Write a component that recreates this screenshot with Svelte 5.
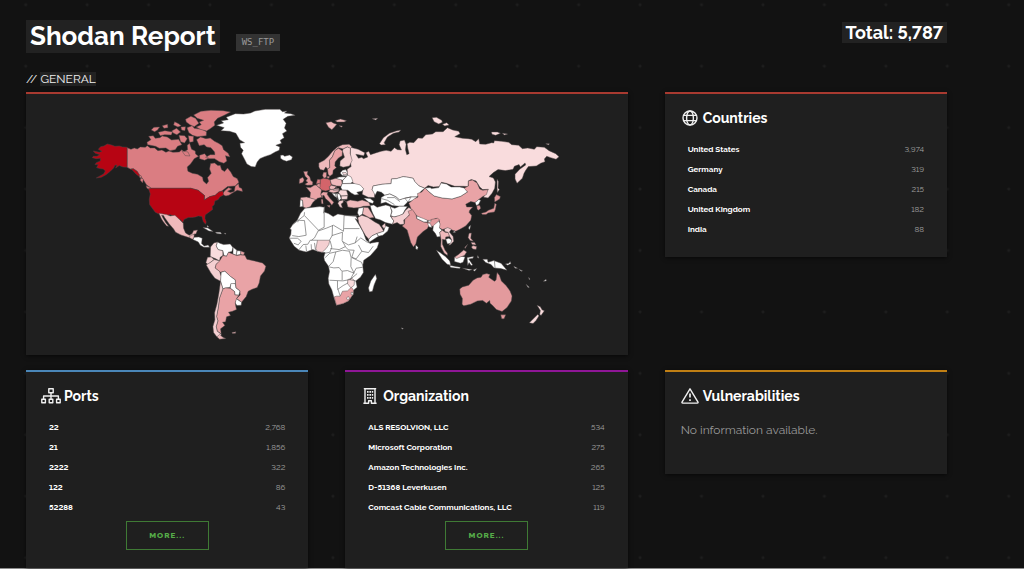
<script lang="ts">
  type Row = [label: string, count: string];
  type Shape = { c: string; d: string };
  type Region = { x: number; y: number; land: Shape[]; borders?: string };

  const countries: Row[] = [
    ['United States', '3,974'],
    ['Germany', '319'],
    ['Canada', '215'],
    ['United Kingdom', '182'],
    ['India', '88'],
  ];
  const ports: Row[] = [
    ['22', '2,768'],
    ['21', '1,856'],
    ['2222', '322'],
    ['122', '86'],
    ['52288', '43'],
  ];
  const organizations: Row[] = [
    ['ALS RESOLVION, LLC', '534'],
    ['Microsoft Corporation', '275'],
    ['Amazon Technologies Inc.', '265'],
    ['D-51368 Leverkusen', '125'],
    ['Comcast Cable Communications, LLC', '119'],
  ];

  // Choropleth steps, from no results to the most results.
  const none = '#ffffff';
  const l1 = '#f9dcdd';
  const l2 = '#f4cfd1';
  const l3 = '#efb9bb';
  const l4 = '#e9a3a6';
  const l5 = '#e39a9d';
  const l6 = '#da7d82';
  const l7 = '#d3646a';
  const top = '#b70413';

  // Every region has its own origin and is plotted at three units per map unit.
  const regions: Region[] = [
    {
      // North America
      x: 80,
      y: 95,
      land: [
        { c: top, d: 'M142 157L128 156 118 153 105 154 95 150 82 147 72 153 62 155 55 163 66 169 58 172 40 168 46 175 60 179 51 184 40 184 37 188 49 191 61 190 61 198 49 203 45 209 55 209 50 218 59 221 70 222 76 228 71 237 60 243 49 249 64 247 79 239 91 229 101 219 105 211 111 210 107 219 118 212 129 216 142 217 151 222 160 221 172 229 184 243 182 248 168 237 157 225 142 217Z' },
        { c: l6, d: 'M142 158L153 163 163 159 172 162 181 156 196 157 202 152 211 159 224 159 234 167 246 165 258 172 267 168 279 172 298 171 306 164 312 170 323 164 322 151 329 145 335 163 346 168 347 177 356 184 343 191 332 207 322 216 324 229 337 235 353 238 368 247 370 258 380 267 386 259 383 248 394 235 389 222 392 206 404 204 414 212 421 211 425 224 434 230 443 219 453 232 460 245 472 251 477 262 466 273 443 275 426 288 417 291 406 301 390 305 373 315 374 302 363 293 355 286 333 280 214 280 200 270 191 256 178 239 172 229 160 221 151 222 142 217Z' },
        { c: l6, d: 'M427 298L435 287 446 278 456 282 443 289 451 293 463 290 466 274 476 266 478 277 486 281 488 290 472 286 460 293 447 301 438 303Z' },
        { c: l6, d: 'M198 272L211 278 213 286 201 280ZM183 247L190 254 188 264 181 256ZM178 240L184 243 186 250 180 249Z' },
        { c: l6, d: 'M206 124L220 122 226 130 240 128 247 123 262 126 275 135 296 133 306 149 293 154 286 164 270 167 258 159 238 160 227 154 203 149 201 142 213 134Z' },
        { c: l6, d: 'M214 105L222 97 239 96 233 105 224 110ZM247 92L263 88 264 98 252 100ZM235 112L255 107 278 111 274 120 254 119 241 122ZM284 80L296 86 304 92 294 96 281 90ZM275 108L290 100 302 111 291 119 281 115ZM303 96L317 95 315 107 305 105ZM297 121L314 122 322 131 314 144 302 140ZM325 122L341 124 340 140 329 142ZM321 98L337 92 343 100 366 103 380 110 379 122 352 125 338 121 327 113Z' },
        { c: l6, d: 'M317 73L333 64 347 70 357 85 343 95 330 89 319 81ZM341 60L363 49 393 46 430 47 452 51 433 61 413 70 403 81 405 91 391 101 380 108 361 103 349 96 364 89 358 81 371 76 352 70Z' },
        { c: l6, d: 'M350 134L362 126 378 131 391 129 404 139 416 145 427 152 431 164 445 175 450 186 437 182 441 198 432 205 418 200 404 191 386 191 377 187 391 179 405 179 404 171 393 158 380 156 373 149 358 152ZM359 181L374 176 386 190 374 196 359 191ZM306 168L324 171 330 183 316 182Z' },
        { c: none, d: 'M410 91L431 84 424 77 445 74 439 67 466 56 491 57 512 54 525 48 556 43 600 43 608 50 622 48 614 54 633 56 646 61 624 64 610 73 619 85 614 99 621 108 608 116 613 128 601 136 605 145 588 151 600 156 598 166 586 171 572 179 554 185 540 191 532 201 526 216 514 215 501 207 493 191 485 176 490 166 482 157 480 145 494 143 479 134 468 115 449 109 423 107 433 98Z' },
        { c: none, d: 'M602 181L610 180 614 184 629 180 638 186 635 194 620 199 609 195 602 190Z' },
        { c: top, d: 'M214 280L333 280 355 286 363 293 374 302 373 315 390 305 406 301 417 291 429 288 431 300 420 306 415 314 405 318 403 329 397 335 398 344 387 352 376 360 375 370 379 381 377 388 370 380 366 365 355 363 347 366 335 368 325 368 312 374 309 383 301 374 292 373 285 365 270 359 260 363 240 359 226 352 220 344 209 329 208 313 211 297 206 281Z' },
      ],
    },
    {
      // Central and South America
      x: 140,
      y: 210,
      land: [
        { c: l3, d: 'M57 10L80 14 91 18 105 16 118 28 130 40 131 55 137 69 148 76 157 71 161 62 173 60 168 72 163 72 160 82 147 83 123 75 107 67 101 57 88 42 74 23 71 17 65 16 70 26 78 39 86 49 80 48 69 34 64 26Z' },
        { c: l3, d: 'M147 82L154 76 163 73 162 84 157 88Z' },
        { c: none, d: 'M163 82L177 81 187 85 185 101 193 108 205 105 209 112 192 112 181 106 175 96 159 89Z' },
        { c: none, d: 'M189 53L204 54 220 65 207 63ZM202 46L207 51 202 52ZM226 67L242 67 245 72 231 71ZM252 70L258 70 257 73Z' },
        { c: l1, d: 'M212 111L222 99 233 96 229 108 235 119 249 122 249 137 241 142 239 153 226 146 211 140Z' },
        { c: none, d: 'M233 96L240 100 251 104 271 102 279 113 276 125 266 127 260 139 252 137 249 122 235 119 229 108Z' },
        { c: none, d: 'M280 112L292 122 289 136 279 132ZM290 122L303 123 303 134 289 136Z' },
        { c: l4, d: 'M303 123L314 128 311 136 302 134Z' },
        { c: l2, d: 'M203 142L214 141 223 149 211 158 204 164 198 158Z' },
        { c: l2, d: 'M223 149L241 153 229 163 226 174 239 184 244 200 242 214 225 205 213 189 199 165 211 158Z' },
        { c: l4, d: 'M239 153L249 137 260 139 266 127 278 132 290 137 302 135 315 136 321 148 344 153 368 159 378 169 374 183 362 198 358 219 352 233 337 238 325 244 319 260 305 277 290 266 301 255 300 243 288 234 286 210 272 200 255 184 242 187 226 174 229 163Z' },
        { c: none, d: 'M244 187L255 184 272 200 286 210 287 221 273 223 270 233 257 234 249 237 242 214Z' },
        { c: none, d: 'M273 221L286 221 288 234 300 243 297 256 285 255 284 245 271 235Z' },
        { c: none, d: 'M288 266L305 277 304 286 291 287 286 279Z' },
        { c: l4, d: 'M249 237L257 234 271 235 284 245 285 255 297 256 290 266 286 279 288 291 290 299 278 304 266 307 272 317 260 321 257 336 248 337 255 347 242 357 244 372 232 364 229 350 234 333 230 320 235 294 239 264Z' },
        { c: l2, d: 'M242 214L249 237 239 264 235 294 230 320 234 333 229 350 232 364 244 373 242 385 230 380 221 368 219 350 225 330 224 309 231 283 237 250Z' },
        { c: l3, d: 'M239 374L249 382 258 386 239 388 231 381ZM276 368L288 366 287 370 278 371Z' },
      ],
    },
    {
      // Europe and northern Asia
      x: 280,
      y: 110,
      land: [
        { c: l1, d: 'M212 112L235 118 255 128 252 137 228 133 236 145 246 142 251 146 264 141 258 128 267 124 272 134 290 128 304 124 319 121 334 124 344 113 353 119 365 120 358 104 361 93 374 90 379 103 377 119 381 134 388 131 384 115 382 101 390 97 402 98 415 84 428 85 438 74 458 72 468 65 490 65 503 53 519 60 537 64 541 71 525 80 548 85 565 86 576 88 588 95 597 86 600 102 618 103 636 98 642 99 644 92 666 94 687 97 696 104 717 106 728 116 744 114 764 118 771 110 794 112 808 122 828 131 838 140 829 148 813 143 801 139 794 147 796 155 783 160 770 168 746 170 738 181 733 190 728 205 712 220 706 207 706 193 720 178 738 165 736 159 722 171 718 164 704 169 700 178 677 182 655 179 641 188 628 200 641 204 647 216 645 235 637 250 625 264 612 262 616 249 626 238 609 239 600 231 589 213 574 209 566 213 565 230 550 229 525 229 510 224 499 220 485 217 479 230 461 231 445 227 435 235 418 228 405 215 400 205 385 202 370 200 351 206 335 207 334 221 307 223 280 228 277 239 285 248 284 263 265 262 247 253 250 235 229 225 215 215 203 199 202 178 214 170 211 152Z' },
        { c: l1, d: 'M299 101L311 83 329 70 349 63 363 60 358 66 341 70 323 81 313 98 317 104 304 105ZM457 23L470 22 486 31 488 37 477 42 463 35ZM488 43L501 38 508 45 495 48ZM635 66L653 66 662 70 648 76 637 73ZM668 70L684 72 674 75ZM798 101L809 101 807 105ZM277 26L294 25 288 30ZM652 208L656 215 655 234 659 239 653 248 652 233Z' },
        { c: l3, d: 'M138 38L154 35 162 40 171 43 164 51 156 59 146 52ZM166 32L182 27 200 32 193 36 172 36ZM178 47L188 48 185 52Z' },
        { c: l3, d: 'M117 171L117 159 133 151 146 139 159 123 173 111 188 104 208 103 216 110 212 116 203 111 190 117 176 113 165 122 158 140 149 151 150 173 143 177 138 171 132 181 121 179Z' },
        { c: l4, d: 'M143 177L150 173 149 151 158 140 165 122 176 115 188 123 187 137 176 144 166 156 165 168 170 173 160 181 159 192 150 199 145 193Z' },
        { c: l2, d: 'M188 123L190 117 203 111 212 115 211 130 217 151 209 168 190 172 180 168 181 153 194 142Z' },
        { c: l5, d: 'M131 187L140 187 140 202 132 205 128 197ZM142 199L149 199 148 205 142 205Z' },
        { c: l7, d: 'M121 209L131 205 144 207 151 210 155 226 148 231 152 239 138 243 125 240 118 231 121 220Z' },
        { c: l5, d: 'M71 185L84 184 82 193 90 201 93 212 99 216 98 225 82 226 75 223 84 217 78 213 83 206 76 199ZM59 207L69 202 73 210 69 218 58 221Z' },
        { c: l4, d: 'M79 232L92 233 103 226 109 225 118 233 125 240 123 252 127 262 113 265 108 270 90 264 92 248Z' },
        { c: l5, d: 'M109 225L120 219 121 231 118 233Z' },
        { c: l6, d: 'M109 222L113 208 121 209 121 220Z' },
        { c: l3, d: 'M63 263L80 261 108 269 99 278 92 290 79 295 70 291 68 271 61 270Z' },
        { c: none, d: 'M61 270L68 271 69 290 60 291Z' },
        { c: l4, d: 'M123 252L130 246 144 247 142 253 151 266 162 277 156 286 149 276 137 266 132 256 125 260ZM141 287L151 286 149 293ZM124 268L129 268 130 282 125 281ZM125 257L129 258 128 265Z' },
        { c: l3, d: 'M151 210L168 205 185 208 187 220 184 229 170 228 155 224ZM148 231L155 226 170 230 161 239 152 239ZM152 239L177 235 177 245 160 249 146 245Z' },
        { c: none, d: 'M188 181L198 179 203 188 202 198 187 197 181 189ZM168 205L178 201 200 200 189 211ZM189 211L203 195 214 201 219 214 213 221 188 221ZM187 221L213 220 225 221 241 225 252 237 245 244 231 247 237 254 225 255 214 249 204 241 187 241 183 232ZM156 249L173 252 172 264 163 258ZM170 250L180 252 184 266 177 273Z' },
        { c: l1, d: 'M181 240L200 241 205 257 184 258 176 248ZM184 258L204 257 202 268 185 269ZM188 187L199 188 202 194 190 194Z' },
        { c: l2, d: 'M178 273L191 270 190 278 184 282 188 294 180 291 174 280Z' },
        { c: l3, d: 'M200 275L211 270 234 274 247 270 267 277 272 288 251 289 239 293 222 294 204 291Z' },
        { c: none, d: 'M252 264L271 266 282 274 279 281 267 277Z' },
        { c: none, d: 'M277 239L280 228 307 223 334 221 335 207 351 206 370 200 385 202 400 205 405 215 418 228 435 235 423 245 412 261 394 261 375 265 359 270 349 261 330 252 315 256 305 247 292 244 286 256Z' },
        { c: none, d: 'M304 263L315 256 330 252 349 261 359 270 375 265 394 261 388 271 380 280 371 289 359 289 337 287 318 277 303 281ZM375 265L394 261 412 261 400 272 384 276Z' },
        { c: none, d: 'M271 287L282 285 292 292 306 288 318 285 331 289 336 304 332 319 342 333 338 343 317 338 302 330 287 326 279 311 275 301Z' },
        { c: none, d: 'M331 290L345 295 359 289 371 289 383 290 375 301 369 313 356 318 342 321 333 317 337 304Z' },
        { c: l2, d: 'M342 333L333 319 345 321 358 317 370 312 377 301 387 293 397 298 393 309 381 324 372 330 373 343 361 344 352 338 338 343Z' },
      ],
      borders: 'M305 266L323 271 344 284M322 263L345 263 360 275M192 270L202 278M160 241L181 240M170 230L172 240M166 252L175 272',
    },
    {
      // Africa and the Middle East
      x: 280,
      y: 190,
      land: [
        { c: none, d: 'M75 55L100 52 120 50 134 52 133 66 146 71 160 80 174 72 191 75 213 78 229 79 234 90 226 86 239 107 250 126 259 150 271 160 292 156 298 157 292 174 272 197 252 211 249 227 251 248 242 262 228 273 232 292 221 301 220 313 206 333 190 341 170 346 162 322 156 300 147 282 145 265 149 245 146 229 134 212 132 201 136 188 125 187 112 184 99 179 79 186 58 181 43 169 32 152 28 144 33 133 34 119 30 117 39 103 52 91 62 70Z' },
        { c: none, d: 'M287 253L291 266 283 285 278 304 269 306 266 294 273 273Z' },
        { c: l2, d: 'M113 151L150 151 147 164 139 176 127 187 112 184 108 176Z' },
        { c: l4, d: 'M163 321L170 319 181 319 188 304 203 303 215 292 221 301 220 313 206 333 190 341 170 346Z' },
        { c: l1, d: 'M204 269L216 265 224 272 223 286 213 294 203 281Z' },
        { c: none, d: 'M200 324L206 320 209 326 203 330ZM214 307L220 308 220 315 214 314Z' },
        { c: l2, d: 'M234 83L246 76 264 82 285 96 298 103 306 114 312 124 291 131 276 138 267 148 257 137 247 119 237 99Z' },
        { c: none, d: 'M267 148L276 138 291 131 296 139 273 154 267 157ZM291 131L312 124 316 107 328 112 324 123 309 136 296 139Z' },
        { c: l2, d: 'M306 108L316 99 317 110 313 117Z' },
        { c: l3, d: 'M251 52L265 53 274 67 283 83 270 84 248 72Z' },
        { c: none, d: 'M236 55L251 52 248 72 238 79 233 69Z' },
      ],
      borders:
        'M74 67L73 77 40 103M74 77L116 121 133 112 133 66M54 97L55 91 74 92 79 136 57 140 37 137M30 145L53 145 64 154 55 165 42 160M56 181L70 164 84 163 91 151 113 151M78 167L80 184M94 163L95 180M104 159L107 181M116 121L104 144 95 151M116 123L139 115 161 106 191 124 193 75M193 116L239 116M158 106L157 137 149 151M151 153L156 172 150 187 135 190M156 137L188 127 187 152 197 170 178 179 152 176M188 155L206 165 226 159 232 140M226 159L243 144 259 155 273 161M236 165L246 184 266 188 280 169M246 184L229 207 216 202 223 181 206 180 196 170M136 203L150 190 168 186 160 215 146 230M168 186L188 181 209 184 214 203 213 230 223 250 203 242 186 244 178 233 162 234 148 231M149 271L189 273 211 269 232 251M211 270L229 235 249 232M187 245L187 271M173 273L173 294 181 318M173 299L190 287 205 279M209 269L228 273M216 203L245 217 249 227M193 77L234 77M131 70L134 50',
    },
    {
      // South-east Asia and Oceania
      x: 380,
      y: 180,
      land: [
        { c: l4, d: 'M87 70L103 57 115 51 113 41 126 36 136 24 147 35 163 48 187 54 217 57 243 49 263 36 251 26 266 18 266 3 278 0 292 9 300 27 309 31 325 29 320 44 307 51 297 59 286 68 273 65 258 73 261 81 279 81 270 91 268 97 276 107 273 121 258 138 239 149 228 154 219 151 204 145 188 149 177 143 179 123 169 115 153 123 132 120 111 108 95 89Z' },
        { c: none, d: 'M136 24L151 23 155 26 177 23 184 9 200 12 214 21 240 21 253 24 263 36 243 49 217 57 187 54 163 48 147 35Z' },
        { c: l5, d: 'M67 138L74 132 75 119 89 105 85 94 98 89 109 105 111 116 132 126 145 128 153 119 173 115 180 120 164 139 146 139 143 146 130 155 113 171 108 192 101 201 93 188 82 150Z' },
        { c: none, d: 'M111 108L131 116 143 121 143 126 132 126 111 116ZM146 121L155 122 152 126 145 127ZM143 130L151 130 157 143 148 141ZM108 195L115 202 113 209 108 207Z' },
        { c: none, d: 'M177 123L181 132 179 144 187 151 180 157 182 170 172 171 167 161 159 151 161 137Z' },
        { c: l3, d: 'M180 157L188 151 196 157 207 158 209 170 198 171 197 180 188 178 188 193 196 211 203 220 203 227 193 219 183 200 184 180Z' },
        { c: l2, d: 'M194 147L204 143 215 148 209 156 220 170 222 184 213 194 207 196 216 180 209 168 205 157 195 155Z' },
        { c: none, d: 'M198 178L207 175 216 180 213 190 203 192ZM227 158L219 157 225 153ZM286 68L297 59 303 61 297 73 290 77Z' },
        { c: l5, d: 'M291 77L300 76 303 85 297 91 292 88ZM305 100L319 96 326 91 342 85 345 70 350 73 347 89 344 96 325 99 319 104 308 104ZM345 66L344 53 350 44 362 50 360 57 350 63Z' },
        { c: none, d: 'M267 141L273 135 270 149 267 147Z' },
        { c: none, d: 'M170 211L181 218 197 230 210 243 213 256 202 253 187 238ZM209 256L224 259 242 262 240 266 213 263ZM224 232L231 231 246 229 256 231 250 247 242 250 224 245ZM262 233L281 230 280 235 267 237 279 255 274 257 268 248 264 257Z' },
        { c: l3, d: 'M224 232L236 224 252 210 261 216 254 227 242 231 231 236Z' },
        { c: l3, d: 'M268 160L275 159 273 175 281 184 271 182 265 173ZM280 197L291 200 289 209 279 207 275 201ZM274 187L285 188 289 195 277 194ZM264 193L256 206 255 202Z' },
        { c: none, d: 'M309 238L323 238 325 247 342 242 364 250 382 271 363 266 343 264 334 254 318 248ZM248 265L278 269 268 272ZM280 270L291 266 285 274ZM294 227L298 235 293 233Z' },
        { c: l5, d: 'M240 327L248 321 267 316 280 301 292 294 304 292 309 284 321 281 331 284 327 292 344 304 349 300 352 278 359 286 365 303 379 317 391 333 397 348 395 363 382 383 367 395 350 389 338 376 331 370 330 362 320 370 309 362 293 363 273 373 252 378 247 373 248 356 241 343ZM363 405L378 405 373 417 366 417Z' },
        { c: l1, d: 'M472 376L482 381 487 390 494 393 484 407 480 403 482 392ZM474 404L478 408 469 422 460 431 449 429 461 417Z' },
        { c: none, d: 'M377 252L388 250 391 245 394 251 384 256ZM402 259L414 265 406 265ZM417 267L429 273 424 274ZM439 313L449 322 445 323ZM447 292L451 298 448 299ZM491 304L499 298 500 303ZM65 444L71 446 67 448Z' },
      ],
      borders: 'M344 243L346 264',
    },
  ];
</script>

{#snippet counts(rows: Row[], caption: string)}
  <table class="counts" aria-label={caption}>
    <tbody>
      {#each rows as [label, count]}
        <tr>
          <th scope="row">{label}</th>
          <td>{count}</td>
        </tr>
      {/each}
    </tbody>
  </table>
{/snippet}

<main class="page">
  <header class="header">
    <div class="header__title">
      <h1>Shodan Report</h1>
      <code class="query">WS_FTP</code>
    </div>
    <p class="total">Total: 5,787</p>
  </header>

  <h2 class="section">// <span>GENERAL</span></h2>

  <div class="grid">
    <section class="card card--red card--map">
      <svg class="map" viewBox="26 94 602 261" role="img" aria-label="World map of results by country">
        {#each regions as region}
          <g transform="translate({region.x} {region.y}) scale({1 / 3})">
            {#each region.land as shape}
              <path d={shape.d} fill={shape.c} />
            {/each}
            {#if region.borders}<path class="map__borders" d={region.borders} />{/if}
          </g>
        {/each}
      </svg>
    </section>

    <section class="card card--red">
      <h3 class="card__title">
        <svg class="icon" viewBox="0 0 18 18" aria-hidden="true">
          <circle cx="9" cy="9" r="7" />
          <ellipse cx="9" cy="9" rx="3.4" ry="7" />
          <path d="M2.6 6.4h12.8M2.6 11.6h12.8" />
        </svg>
        Countries
      </h3>
      {@render counts(countries, 'Countries')}
    </section>

    <section class="card card--blue" id="ports">
      <h3 class="card__title">
        <svg class="icon" viewBox="0 0 18 18" aria-hidden="true">
          <path d="M6.8 1.8h4.4v4H6.8zM-.2 12.2h3.6v3.6H-.2zM7.2 12.2h3.6v3.6H7.2zM14.6 12.2h3.6v3.6h-3.6zM9 5.8v6.4M1.6 12.2V9h14.8v3.2" />
        </svg>
        Ports
      </h3>
      {@render counts(ports, 'Ports')}
      <a class="more" href="#ports">MORE...</a>
    </section>

    <section class="card card--purple" id="organization">
      <h3 class="card__title">
        <svg class="icon" viewBox="0 0 18 18" aria-hidden="true">
          <path d="M4 16V1.8h10V16M2.4 16.2h5.2v-2.4h2.8v2.4h5.2M2.8 1.6h12.4" />
          <path class="icon__windows" d="M6 4.8h1.6M8.4 4.8H10M10.8 4.8h1.4M6 7.8h1.6M8.4 7.8H10M10.8 7.8h1.4M6 10.8h1.6M8.4 10.8H10M10.8 10.8h1.4" />
        </svg>
        Organization
      </h3>
      {@render counts(organizations, 'Organization')}
      <a class="more" href="#organization">MORE...</a>
    </section>

    <section class="card card--amber card--empty">
      <h3 class="card__title">
        <svg class="icon" viewBox="0 0 18 18" aria-hidden="true">
          <path d="M9 1.8L17 15.2q.3.9-.7.9H1.7q-1 0-.7-.9z" />
          <path class="icon__mark" d="M9 6.6v4M9 12.2v1.8" />
        </svg>
        Vulnerabilities
      </h3>
      <p>No information available.</p>
    </section>
  </div>
</main>

<style>
  :global(body) {
    background: #121212;
  }
  .page {
    box-sizing: border-box;
    min-height: 100vh;
    padding: 20px 77px 0 26px;
    border-bottom: 1px solid #8c8c8c;
    background: radial-gradient(circle, #222 0, #1c1c1c 1px, transparent 2px) -5px -26px / 6vw 6vw #121212;
    color: #fff;
    font-family: Raleway, Lato, 'Open Sans', sans-serif;
    font-variant-numeric: lining-nums;
  }
  h1,
  h2,
  h3,
  p {
    margin: 0;
  }

  .header {
    display: flex;
    align-items: flex-start;
    justify-content: space-between;
  }
  .header__title {
    display: flex;
    align-items: flex-end;
    gap: 16px;
  }
  h1 {
    padding: 0 4px;
    background: #222;
    font-size: 26px;
    line-height: 33px;
    font-weight: 700;
  }
  .query {
    margin-bottom: 2px;
    padding: 0 6px;
    background: #333;
    color: #999;
    font: 9px/17px 'DejaVu Sans Mono', monospace;
  }
  .total {
    margin-top: 2px;
    padding: 0 4px;
    background: #222;
    font-size: 18px;
    line-height: 21px;
    font-weight: 700;
  }

  .section {
    padding: 19px 0 5px;
    color: #f0f0f0;
    font-size: 12px;
    line-height: 15px;
    font-weight: 400;
  }
  .section span {
    background: #222;
  }

  .grid {
    display: grid;
    grid-template-columns: repeat(3, minmax(0, 1fr));
    gap: 15px 37px;
    align-items: start;
  }
  .card {
    border-top: 2px solid;
    background: #1f1f1f;
    box-shadow: 0 1px 4px rgba(0, 0, 0, 0.6);
    padding: 14px 16px 18px;
  }
  .card--map {
    grid-column: span 2;
    padding: 0;
  }
  .card--red { border-color: #a83a30; }
  .card--blue { border-color: #4a86b8; }
  .card--purple { border-color: #8f1696; }
  .card--amber { border-color: #c07f14; }
  .card--empty { padding-bottom: 34px; }
  .card--empty p {
    margin-top: 14px;
    color: #999;
    font-size: 12px;
    line-height: 20px;
  }
  .card__title {
    display: flex;
    align-items: center;
    gap: 4px;
    font-size: 14px;
    line-height: 20px;
    font-weight: 700;
  }

  .icon {
    flex: none;
    width: 18px;
    height: 18px;
    overflow: visible;
    fill: none;
    stroke: #f0f0f0;
    stroke-width: 1.4;
    stroke-linejoin: round;
  }
  .icon__windows { stroke-width: 1.8; }
  .icon__mark { stroke-width: 1.7; }

  .map {
    display: block;
    width: 100%;
  }
  .map path {
    stroke: #4d4848;
    stroke-width: 1.4;
    stroke-linejoin: round;
  }
  .map .map__borders {
    fill: none;
    stroke: #666;
    stroke-width: 2;
  }

  .counts {
    width: 100%;
    margin-top: 11px;
    border-collapse: collapse;
    font-size: 8px;
    line-height: 20px;
  }
  .counts th,
  .counts td {
    padding: 0 7px;
  }
  .counts th {
    color: #fff;
    font-weight: 700;
    text-align: left;
  }
  .counts td {
    color: #a0a0a0;
    text-align: right;
  }

  .more {
    display: block;
    box-sizing: border-box;
    width: 83px;
    margin: 4px auto 0;
    border: 1px solid #3f7a35;
    color: #55ab48;
    font-size: 8px;
    line-height: 27px;
    font-weight: 800;
    letter-spacing: 1px;
    text-align: center;
    text-decoration: none;
  }
</style>
